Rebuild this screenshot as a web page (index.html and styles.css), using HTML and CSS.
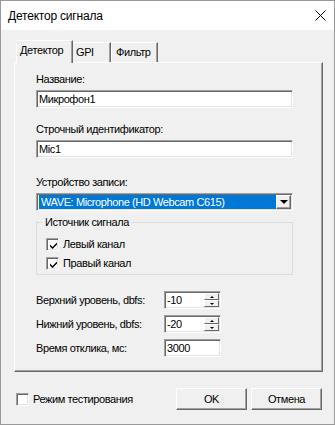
FILE: index.html
```html
<!doctype html>
<html>
    <head>
        <meta charset="utf-8">
        <link rel="stylesheet" href="styles.css">
    </head>
    <body>
        <div class="window">
            <div class="titlebar">
                <span class="title">Детектор сигнала</span>
                <svg class="close" width="11" height="11" viewBox="0 0 11 11">
                    <path d="M0.5 0.5 L10.5 10.5 M10.5 0.5 L0.5 10.5" stroke="#000" stroke-width="1" fill="none" />
                </svg>
            </div>
            <div class="main">
                <div class="tabs">
                    <div class="tab active">Детектор</div>
                    <div class="tab gpi">GPI</div>
                    <div class="tab filter">Фильтр</div>
                </div>
                <div class="panel">
                    <span class="label">Название:</span>
                    <div class="edit">Микрофон1</div>

                    <span class="label gap1">Строчный идентификатор:</span>
                    <div class="edit">Mic1</div>

                    <span class="label gap2">Устройство записи:</span>
                    <div class="combo">
                        <span class="combo-value">WAVE: Microphone (HD Webcam C615)</span>
                        <span class="combo-btn"><span class="arrow-down"></span></span>
                    </div>

                    <fieldset class="group">
                        <legend>Источник сигнала</legend>
                        <div class="check first">
                            <span class="box">
                                <svg width="9" height="9" viewBox="0 0 9 9">
                                    <path d="M1 3.5 L3.5 6 L8 1.5 L8 3.5 L3.5 8 L1 5.5 Z" fill="#000" />
                                </svg>
                            </span>
                            Левый канал
                        </div>
                        <div class="check">
                            <span class="box">
                                <svg width="9" height="9" viewBox="0 0 9 9">
                                    <path d="M1 3.5 L3.5 6 L8 1.5 L8 3.5 L3.5 8 L1 5.5 Z" fill="#000" />
                                </svg>
                            </span>
                            Правый канал
                        </div>
                    </fieldset>

                    <div class="levels">
                        <span>Верхний уровень, dbfs:</span>
                        <div class="edit small spin">
                            <span class="spin-value">-10</span>
                            <span class="spin-btns">
                                <span class="spin-btn"><span class="arrow-up"></span></span>
                                <span class="spin-btn"><span class="arrow-dn"></span></span>
                            </span>
                        </div>

                        <span>Нижний уровень, dbfs:</span>
                        <div class="edit small spin">
                            <span class="spin-value">-20</span>
                            <span class="spin-btns">
                                <span class="spin-btn"><span class="arrow-up"></span></span>
                                <span class="spin-btn"><span class="arrow-dn"></span></span>
                            </span>
                        </div>

                        <span>Время отклика, мс:</span>
                        <div class="edit small">3000</div>
                    </div>
                </div>
            </div>
            <div class="footer">
                <div class="check">
                    <span class="box"></span>
                    Режим тестирования
                </div>
                <div class="buttons">
                    <button class="btn">OK</button>
                    <button class="btn">Отмена</button>
                </div>
            </div>
        </div>
    </body>
</html>
```

FILE: styles.css
```css
* {
    margin: 0;
    padding: 0;
    box-sizing: border-box;
}
body {
    background: #fff;
    font-family: "Liberation Sans", Arial, sans-serif;
    font-size: 11px;
    letter-spacing: -0.4px;
    color: #000;
}
.window {
    width: 335px;
    height: 425px;
    border: 1px solid #999;
    background: #f0f0f0;
    display: flex;
    flex-direction: column;
}
.titlebar {
    height: 29px;
    background: #fff;
    display: flex;
    align-items: center;
    justify-content: space-between;
    padding: 0 8px 0 7px;
}
.title {
    font-family: "Liberation Sans", Arial, sans-serif;
    font-size: 12px;
    letter-spacing: -0.2px;
}
.main {
    padding: 10px 11px 0 13px;
}
.tabs {
    display: flex;
    align-items: flex-end;
    height: 22px;
    padding-left: 2px;
}
.tab {
    height: 20px;
    padding: 3px 0 0 3px;
    line-height: 13px;
    border-top: 1px solid #fff;
    border-right: 1px solid #696969;
    box-shadow: inset -1px 0 #a0a0a0;
}
.tab.active {
    width: 57px;
    height: 23px;
    margin-bottom: -1px;
    position: relative;
    z-index: 1;
    background: #f0f0f0;
    border-left: 1px solid #fff;
}
.tab.gpi {
    width: 38px;
}
.tab.filter {
    width: 47px;
    padding-left: 4px;
    border-left: 1px solid #fff;
}
.panel {
    height: 310px;
    border: 1px solid;
    border-color: #fff #696969 #696969 #fff;
    box-shadow: inset -1px -1px #a0a0a0;
    padding: 10px 0 0 21px;
}
.label {
    display: block;
    line-height: 13px;
    margin-bottom: 4px;
}
.gap1 {
    margin-top: 15px;
}
.gap2 {
    margin-top: 18px;
}
.edit {
    width: 257px;
    height: 18px;
    background: #fff;
    border: 1px solid;
    border-color: #a0a0a0 #fff #fff #a0a0a0;
    box-shadow: inset 1px 1px #696969, inset -1px -1px #e3e3e3;
    padding: 2px 2px;
    line-height: 13px;
}
.edit.small {
    width: 57px;
}
.combo {
    width: 257px;
    height: 18px;
    background: #fff;
    border: 1px solid;
    border-color: #a0a0a0 #fff #fff #a0a0a0;
    box-shadow: inset 1px 1px #696969, inset -1px -1px #e3e3e3;
    padding: 1px;
    display: flex;
}
.combo-value {
    flex: 1;
    margin-left: 1px;
    background: #0078d7;
    color: #fff;
    padding-left: 2px;
    line-height: 14px;
}
.combo-btn {
    width: 15px;
    display: flex;
    align-items: center;
    justify-content: center;
    background: #f0f0f0;
    border: 1px solid;
    border-color: #fff #696969 #696969 #fff;
    box-shadow: inset -1px -1px #a0a0a0;
}
.arrow-down {
    width: 0;
    height: 0;
    border-left: 4px solid transparent;
    border-right: 4px solid transparent;
    border-top: 4px solid #000;
}
.group {
    width: 257px;
    margin-top: 5px;
    border: 1px solid #dcdcdc;
    padding: 0 0 4px 6px;
}
.group legend {
    padding: 0 2px;
    line-height: 13px;
}
.group .check {
    margin-top: 6px;
    padding-left: 3px;
}
.group .check.first {
    margin-top: 9px;
}
.check {
    display: flex;
    align-items: center;
    gap: 4px;
    height: 13px;
    line-height: 13px;
}
.box {
    width: 13px;
    height: 13px;
    background: #fff;
    border: 1px solid;
    border-color: #a0a0a0 #fff #fff #a0a0a0;
    box-shadow: inset 1px 1px #696969, inset -1px -1px #e3e3e3;
    display: flex;
    align-items: center;
    justify-content: center;
    padding: 1px 0 0 1px;
}
.box svg {
    display: block;
}
.levels {
    display: grid;
    grid-template-columns: 128px 57px;
    row-gap: 6px;
    margin-top: 16px;
    align-items: center;
    line-height: 13px;
}
.spin {
    display: flex;
    padding: 1px 1px 1px 2px;
}
.spin-value {
    flex: 1;
    padding-top: 1px;
}
.spin-btns {
    width: 15px;
    display: flex;
    flex-direction: column;
}
.spin-btn {
    height: 7px;
    display: flex;
    align-items: center;
    justify-content: center;
    background: #f0f0f0;
    border: 1px solid;
    border-color: #fff #696969 #696969 #fff;
}
.arrow-up {
    width: 0;
    height: 0;
    border-left: 2px solid transparent;
    border-right: 2px solid transparent;
    border-bottom: 2px solid #000;
}
.arrow-dn {
    width: 0;
    height: 0;
    border-left: 2px solid transparent;
    border-right: 2px solid transparent;
    border-top: 2px solid #000;
}
.footer {
    display: flex;
    align-items: center;
    height: 22px;
    margin-top: 16px;
    padding: 0 12px 0 15px;
}
.buttons {
    margin-left: auto;
    display: flex;
    gap: 4px;
}
.btn {
    width: 71px;
    height: 22px;
    font-family: "Liberation Sans", Arial, sans-serif;
    font-size: 11px;
    letter-spacing: -0.4px;
    color: #000;
    background: #f0f0f0;
    border: 1px solid;
    border-color: #fff #696969 #696969 #fff;
    box-shadow: inset -1px -1px #a0a0a0;
}
```
